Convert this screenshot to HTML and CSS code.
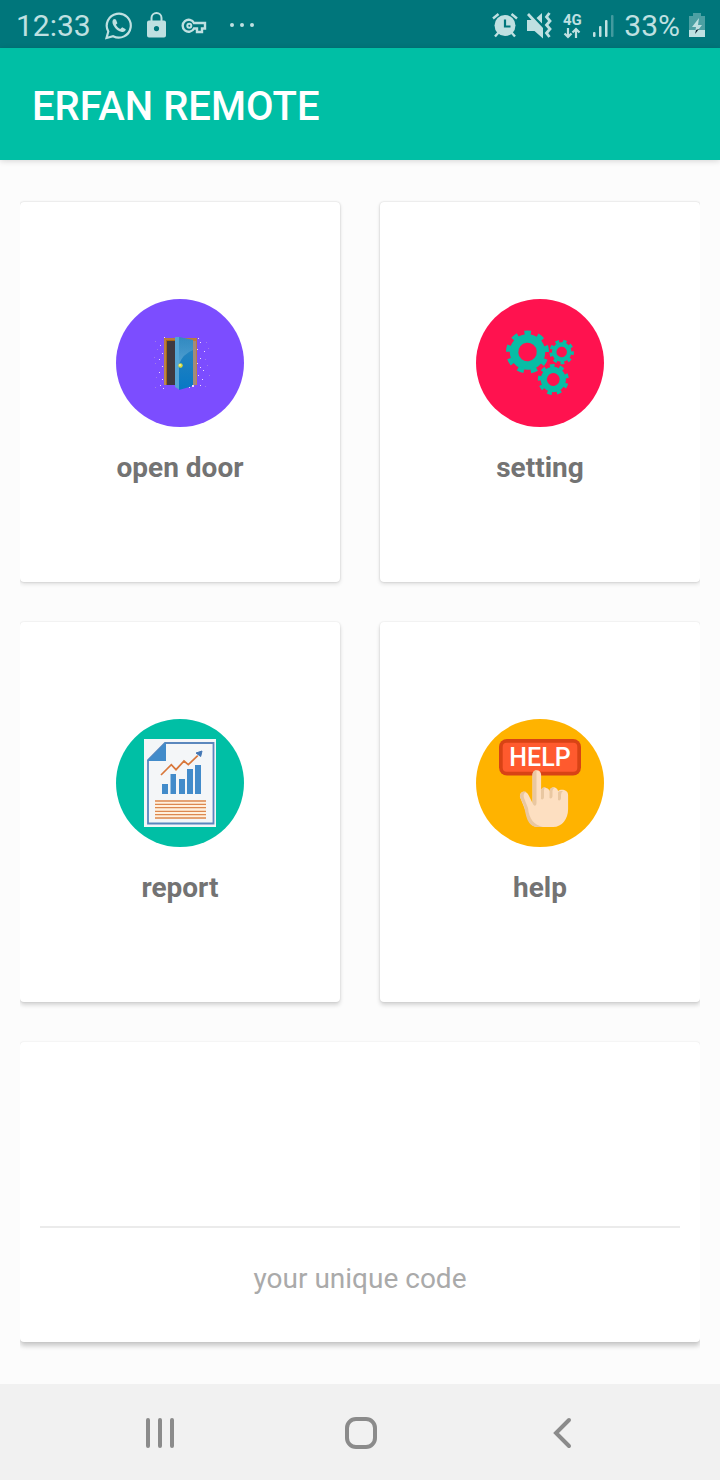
FILE: index.html
```html
<!DOCTYPE html>
<html lang="en">
<head>
<meta charset="utf-8">
<meta name="viewport" content="width=device-width, initial-scale=1">
<title>ERFAN REMOTE</title>
<link rel="stylesheet" href="styles.css">
</head>
<body>
<div class="screen">
  <div class="status">
    <div class="status-left">
      <span class="status-text">12:33</span>
      <svg width="28" height="28" viewBox="0 0 28 28"><path d="M1.500 26 3.300 19.500A12 12 0 1 1 8.100 24.200Z" fill="none" stroke="currentColor" stroke-width="2.200"/><path d="M9 7C7 8 7 11 8.500 13.500c2 3.500 5 6 8.500 6.500 2 .2 3.500-1 3.800-2.800l-3.600-2-1.900 1.800c-2-.9-3.500-2.300-4.400-4.200l1.500-1.600-1.500-3.800z" fill="currentColor"/></svg>
      <svg width="20" height="28" viewBox="0 0 20 28"><path d="M4.500 10V6a5 5 0 0 1 10 0v4" fill="none" stroke="currentColor" stroke-width="2"/><path fill-rule="evenodd" d="M2 8.500h15a2 2 0 0 1 2 2v13a2 2 0 0 1-2 2H2a2 2 0 0 1-2-2v-13a2 2 0 0 1 2-2zM9.500 14a2.600 2.600 0 1 0 0 5.200 2.600 2.600 0 0 0 0-5.200z" fill="currentColor"/></svg>
      <svg class="key" width="26" height="28" viewBox="0 0 26 28"><path d="M13 11A6 6 0 1 0 13 16.500h3V20h5v-3.500h3V11z" fill="none" stroke="currentColor" stroke-width="2.400"/><circle cx="8.300" cy="13.700" r="2" fill="none" stroke="currentColor" stroke-width="2"/></svg>
      <svg class="more" width="26" height="28" viewBox="0 0 26 28" fill="currentColor"><circle cx="3" cy="13" r="2"/><circle cx="13" cy="13" r="2"/><circle cx="23" cy="13" r="2"/></svg>
    </div>
    <div class="status-right">
      <svg width="26" height="28" viewBox="0 0 26 28"><path d="M1 6.500 6.500 2M25 6.500 19.500 2M7 20l-4 4.500M19 20l4 4.500" stroke="currentColor" stroke-width="2.400"/><circle cx="13" cy="13.500" r="10.500" fill="currentColor"/><path d="M13 7.500v7h5.500" fill="none" stroke="#00767b" stroke-width="2.200"/></svg>
      <svg width="26" height="28" viewBox="0 0 26 28"><path d="M1 8h4.500L1 3l2-2 14 15v10.500L8.500 19H1zM10.500 6 16 1v10.500z" fill="currentColor"/><path d="m23.500 1-3 4 3.500 4-3.500 4 3.500 4-3.500 4 3 4" fill="none" stroke="currentColor" stroke-width="2.800"/></svg>
      <div class="network"><span>4G</span><svg width="18" height="12" viewBox="0 0 18 12"><path d="M5 1v9M1.500 6.500 5 10l3.500-3.500M13 11V2M9.500 5.500 13 2l3.500 3.500" fill="none" stroke="currentColor" stroke-width="2.200"/></svg></div>
      <svg width="24" height="28" viewBox="0 0 24 28" fill="currentColor"><rect x="1" y="20" width="2.500" height="5" rx="1"/><rect x="7" y="14" width="2.500" height="11" rx="1"/><rect x="13" y="8" width="2.500" height="17" rx="1"/><rect x="19" y="3" width="2.500" height="22" rx="1" opacity=".35"/></svg>
      <span class="status-text">33%</span>
      <svg width="18" height="28" viewBox="0 0 18 28"><path d="M5 1h8v3h4v15H1V4h4z" fill="currentColor" opacity=".4"/><path d="M1 18h16v7H1z" fill="currentColor"/><path d="M11 6 4 15h4l-1 7 7-9h-4z" fill="currentColor"/><path d="m8 18 3-1-4 5z" fill="#123"/></svg>
    </div>
  </div>

  <header class="appbar"><h1>ERFAN REMOTE</h1></header>

  <main class="content">
    <button class="card tile low" type="button">
      <svg class="badge" viewBox="0 0 128 128">
        <defs>
          <linearGradient id="door" x1="0" y1="0" x2="0" y2="1"><stop offset="0" stop-color="#2d86bd"/><stop offset="1" stop-color="#0878c5"/></linearGradient>
          <linearGradient id="frame" x1="0" y1="0" x2="0" y2="1"><stop offset="0" stop-color="#b97a3d"/><stop offset="1" stop-color="#b98a50"/></linearGradient>
          <linearGradient id="shine" x1="0" y1="0" x2="0" y2="1"><stop offset="0" stop-color="#61a9d4" stop-opacity=".1"/><stop offset="1" stop-color="#61a9d4" stop-opacity=".8"/></linearGradient>
        </defs>
        <circle cx="64" cy="64" r="64" fill="#7c4dff"/>
        <path d="M48 39h33v47H48z" fill="url(#frame)"/>
        <path d="M50 41h10v45H50z" fill="#a96810"/>
        <path d="M51 42h9v44h-9z" fill="#3f3940"/>
        <path d="M77 42h3v43l-3 2z" fill="#a18b7e"/>
        <path d="M59 38h5v53l-5-3z" fill="#55a5d5"/>
        <path d="M63 38 77 41v46l-14 4z" fill="url(#door)"/>
        <path d="M63 38 77 41v10q-10 4-14 14z" fill="url(#shine)"/>
        <circle cx="64.500" cy="66.500" r="2.200" fill="#d9db3a"/><circle cx="64" cy="66" r=".8" fill="#fff"/>
        <g fill="#efd7ff"><path d="M48 38h1v1h-1zM44 46h1v1h-1zM46 54h1v1h-1zM43 60h1v1h-1zM46 67h1v1h-1zM43 73h1v1h-1zM46 80h1v1h-1zM44 86h1v1h-1zM47 89h1v1h-1zM82 39h1v1h-1zM84 43h1v1h-1zM81 50h1v1h-1zM88 52h1v1h-1zM84 59h1v1h-1zM81 64h1v1h-1zM84 68h1v1h-1zM87 71h1v1h-1zM82 76h1v1h-1zM86 80h1v1h-1zM84 86h1v1h-1zM76 86h2v2h-2zM73 88h1v1h-1z"/></g>
        <g fill="#a07be8"><path d="M39 42h1v1h-1zM41 50h1v1h-1zM38 58h1v1h-1zM39 64h1v1h-1zM40 78h1v1h-1zM39 88h1v1h-1zM90 43h1v1h-1zM92 49h1v1h-1zM89 60h1v1h-1zM91 66h1v1h-1zM93 76h1v1h-1zM89 87h1v1h-1z"/></g>
      </svg>
      <span class="label">open door</span>
    </button>

    <button class="card tile low" type="button">
      <svg class="badge" viewBox="0 0 128 128">
        <circle cx="64" cy="64" r="64" fill="#ff124f"/>
        <g fill="none" stroke="#08bda5">
          <g transform="translate(51.500 53) rotate(-96)"><circle r="13.500" stroke-width="8.500"/><circle r="19" stroke-width="5" pathLength="90" stroke-dasharray="4.800 5.200" transform="rotate(-3)"/></g>
          <g transform="translate(85.700 53) rotate(-84)"><circle r="7.500" stroke-width="4.500"/><circle r="10.500" stroke-width="3.500" pathLength="90" stroke-dasharray="5 5"/></g>
          <g transform="translate(77.300 80.500) rotate(-104)"><circle r="9.500" stroke-width="6.200"/><circle r="13.500" stroke-width="4" pathLength="90" stroke-dasharray="4.800 5.200"/></g>
        </g>
      </svg>
      <span class="label">setting</span>
    </button>

    <button class="card tile mid" type="button">
      <svg class="badge" viewBox="0 0 128 128">
        <circle cx="64" cy="64" r="64" fill="#00bfa5"/>
        <path d="M28 20h72v88H28z" fill="#f4f6f8"/>
        <path d="M49 24h48.500v80.500H32V41z" fill="none" stroke="#5b87bd" stroke-width="1.800"/>
        <path d="M50 23v19H31z" fill="#428bca"/>
        <path d="M46 65h6v10h-6zM54.500 55H60v20h-5.500zM63 60h6v15h-6zM71 50h6v25h-6zM79 46h6v29h-6z" fill="#428bca"/>
        <path d="m45 56 10.300-10.300 4.700 5L68 42l4.300 3.700 9.400-9" fill="none" stroke="#d9773a" stroke-width="1.700"/>
        <path d="m80 34 6-2-1.300 5.500z" fill="#4477b5" stroke="#4477b5"/>
        <path d="M39 81h51v19H39z" fill="#fff0dd"/>
        <path d="M39 82h51M39 85.300h51M39 88.700h51M39 92.300h51M39 95.700h51M39 99h51" stroke="#dc8850" stroke-width="1.300"/>
      </svg>
      <span class="label">report</span>
    </button>

    <button class="card tile mid" type="button">
      <svg class="badge" viewBox="0 0 128 128">
        <circle cx="64" cy="64" r="64" fill="#ffb300"/>
        <rect x="23" y="20" width="82" height="36.500" rx="8" fill="#d84315"/>
        <rect x="26.700" y="23.700" width="74.600" height="29" rx="4" fill="#ff5a2e"/>
        <text class="help-word" x="64" y="47" text-anchor="middle">HELP</text>
        <path d="M56.500 55.500a4.300 4.300 0 0 1 8.600 0V71c1-3 7-3 8.500 1 1-5 7-5 8.500 0 2-2 10-2 10 4v14c0 10-6 18-15 18H62c-8 0-11-8-12-15l-6-15c-.5-6 6-7 8.500-2l4 8z" fill="#fddfc1"/>
        <path d="M60.500 51.300a4.300 4.300 0 0 0-4 4.200V84c1.500 4 4 3 4 0zM50 72.600c-4-.8-6.500 2-6 5.400l4 9c2 9 3 21 14 21h5c-9-2-14-8-15-19l-4-10c-1-3 0-5 2-6.400z" fill="#e9c7a1"/>
        <path d="M65 67v13c1.500 1 3 0 3-2v-7q0-2 2-2.700c-2-1-4 .2-5 2.700M73.500 72v7c1.500 1 3 0 3-2v-5q0-2 2-3.300c-3-.7-5 1-5 3.300M82 74v7c1.500 1 3 0 3-2v-3q0-3 2-3.700c-3-.7-5 0-5 1.700" fill="#e9c7a1"/>
      </svg>
      <span class="label">help</span>
    </button>

    <section class="card code high">
      <p class="hint">your unique code</p>
    </section>
  </main>

  <nav class="navbar">
    <button type="button" aria-label="Recent apps"><svg width="32" height="36" viewBox="0 0 32 36"><path d="M4 5v26M16 5v26M28 5v26" stroke="#8b8b8b" stroke-width="4" stroke-linecap="round"/></svg></button>
    <button type="button" aria-label="Home"><svg width="36" height="36" viewBox="0 0 36 36"><rect x="5" y="4" width="28" height="28" rx="9" fill="none" stroke="#8b8b8b" stroke-width="4"/></svg></button>
    <button type="button" aria-label="Back"><svg width="28" height="36" viewBox="0 0 28 36"><path d="M23 5 10 18l13 13" fill="none" stroke="#8b8b8b" stroke-width="4" stroke-linecap="round"/></svg></button>
  </nav>
</div>
</body>
</html>
```

FILE: styles.css
```css
* {
  box-sizing: border-box;
}

body {
  margin: 0;
  background: #fcfcfc;
  font-family: Roboto, sans-serif;
}

svg {
  display: block;
  flex: none;
}

button {
  border: 0;
  padding: 0;
  font: inherit;
  cursor: pointer;
}

.screen {
  display: flex;
  flex-direction: column;
  min-height: 100vh;
}

.status {
  display: flex;
  justify-content: space-between;
  align-items: center;
  height: 48px;
  padding: 4px 14px 0 16px;
  background: #00767b;
  color: #bfe0e1;
}

.status-left,
.status-right {
  display: flex;
  align-items: center;
}

.status-left {
  gap: 14px;
}

.status-right {
  gap: 8px;
}

.status-text {
  font-size: 30px;
  line-height: 36px;
}

.more {
  margin-left: 8px;
}

.network {
  display: flex;
  flex-direction: column;
  align-items: center;
  width: 24px;
  font-size: 15px;
  font-weight: 700;
  line-height: 14px;
}

.appbar {
  display: flex;
  align-items: center;
  height: 112px;
  padding: 6px 32px 0;
  background: #00bfa5;
  box-shadow: 0 1px 6px rgba(0, 0, 0, 0.16);
}

.appbar h1 {
  margin: 0;
  color: #fff;
  font-size: 40px;
  font-weight: 500;
  line-height: 48px;
}

.content {
  flex: 1;
  display: grid;
  grid-template-columns: 1fr 1fr;
  align-content: start;
  gap: 40px;
  margin: 42px 20px;
  clip-path: inset(-12px 0);
}

.card {
  border-radius: 4px;
  background: #fff;
}

.low {
  box-shadow: 0 0 2px rgba(0, 0, 0, 0.18), 0 2px 4px rgba(0, 0, 0, 0.12);
}

.mid {
  box-shadow: 0 0 2px rgba(0, 0, 0, 0.12), 0 3px 4px rgba(0, 0, 0, 0.16);
}

.high {
  box-shadow: 0 0 2px rgba(0, 0, 0, 0.1), 0 4px 5px rgba(0, 0, 0, 0.2);
}

.tile {
  display: flex;
  flex-direction: column;
  align-items: center;
  justify-content: center;
  gap: 24px;
  min-height: 380px;
}

.badge {
  width: 128px;
  height: 128px;
}

.help-word {
  fill: #fff;
  font-size: 25px;
  font-weight: 500;
}

.label {
  color: #737373;
  font-size: 28px;
  font-weight: 700;
  line-height: 34px;
}

.code {
  grid-column: 1 / -1;
  display: flex;
  flex-direction: column;
  justify-content: flex-end;
  min-height: 300px;
  padding: 0 20px;
}

.hint {
  margin: 0;
  padding: 34px 0 46px;
  border-top: 2px solid #ebebeb;
  color: #aaa;
  font-size: 28px;
  line-height: 34px;
  text-align: center;
}

.navbar {
  display: grid;
  grid-template-columns: repeat(3, 1fr);
  height: 96px;
  padding: 2px 60px 0;
  background: #f1f1f1;
}

.navbar button {
  display: flex;
  align-items: center;
  justify-content: center;
  background: none;
}
```
